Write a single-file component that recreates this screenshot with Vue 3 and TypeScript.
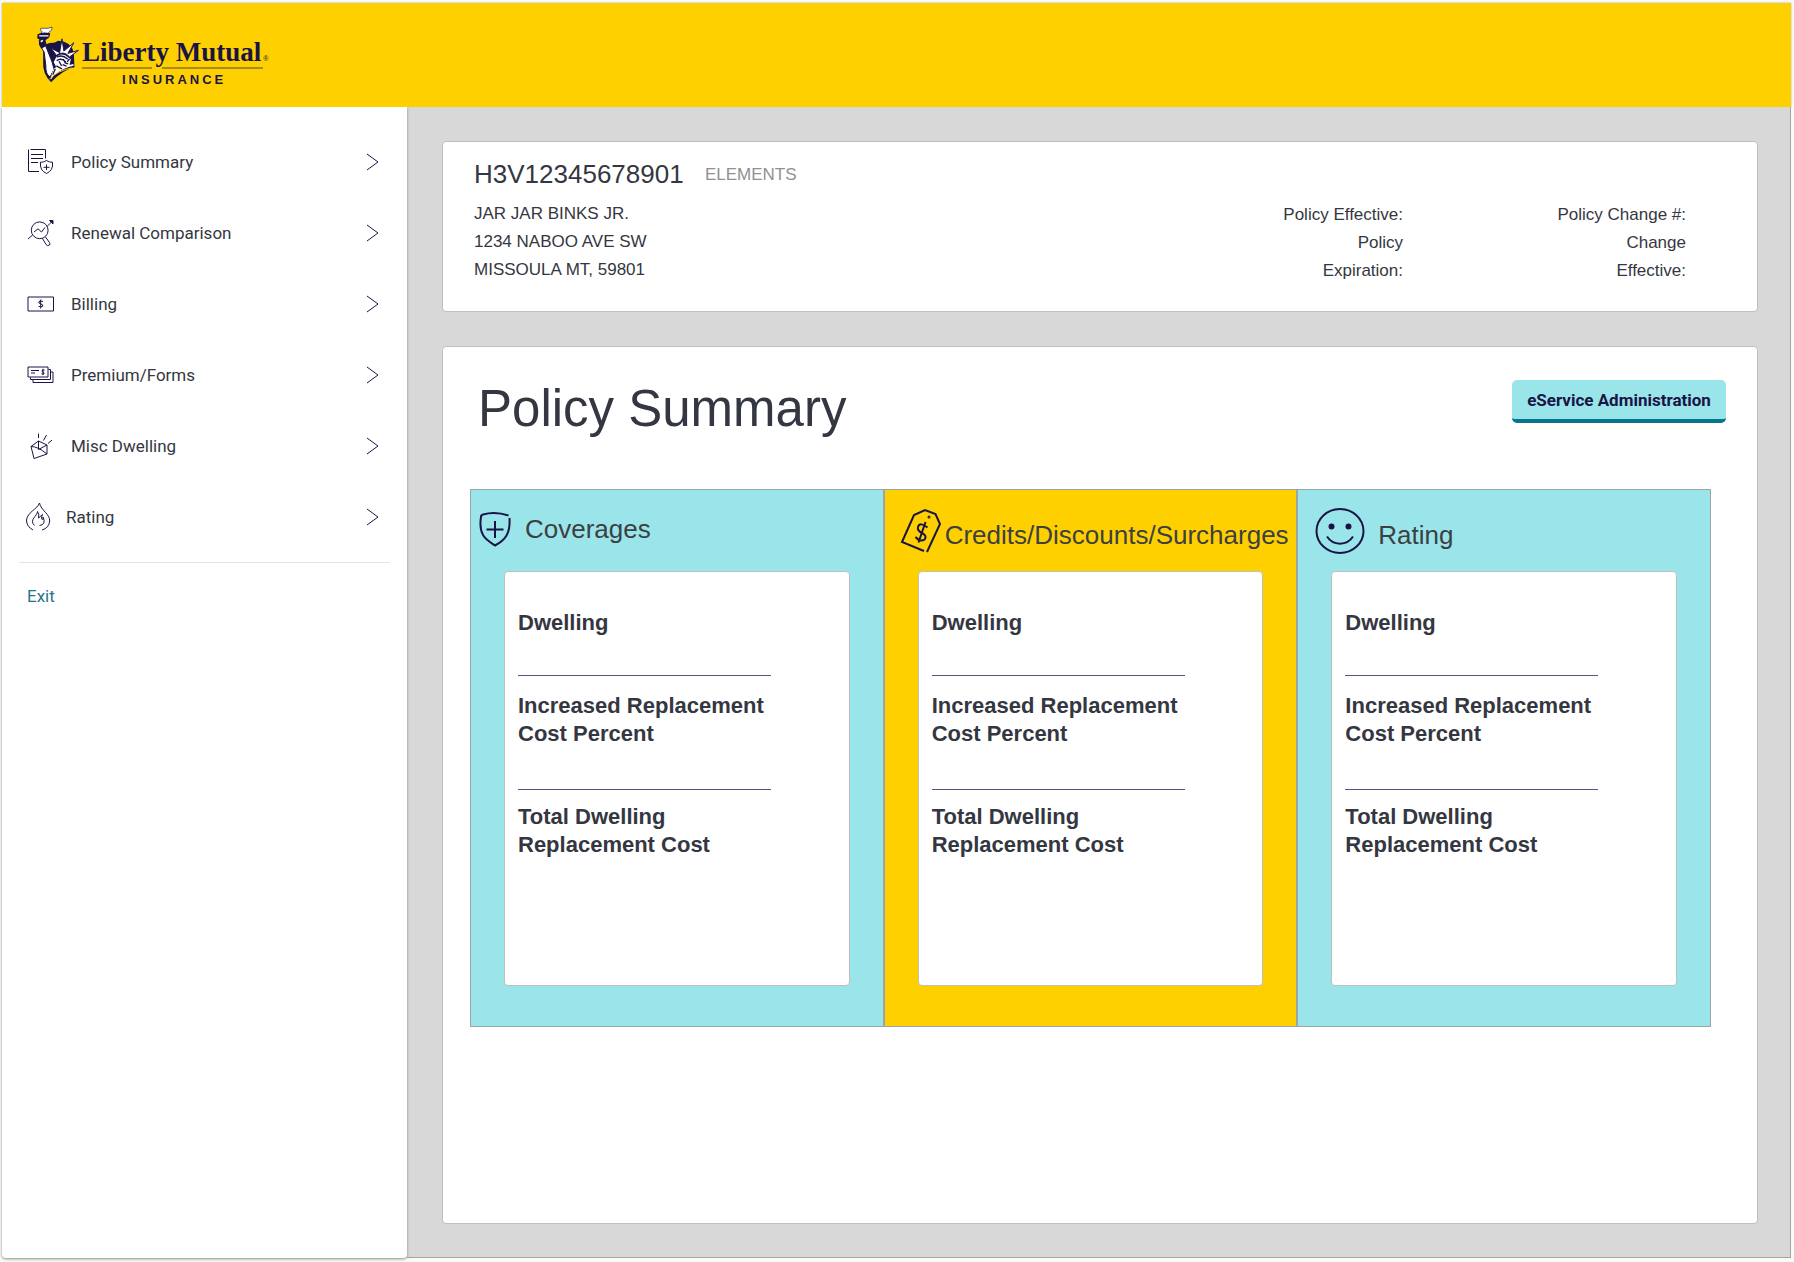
<script setup lang="ts">
interface Shape {
  d: string
  solid?: boolean
}

interface Icon {
  width: number
  height: number
  stroke: number
  shapes: Shape[]
}

interface NavItem {
  label: string
  icon: Icon
  tight?: boolean
}

interface Column {
  title: string
  icon: Icon
  tone: 'aqua' | 'gold'
  variant: string
}

const documentIcon: Icon = {
  width: 28, height: 28, stroke: 1,
  shapes: [
    { d: 'M3.500 1.500H18.500V10.500M1.500 1.500V23.500H12' },
    { d: 'M4 6.500H16M4 10.500H16M4 14.500H11' },
    { d: 'M19.500 12.500Q16.500 14.500 13.500 14.200Q12.500 22.500 19.500 25.500Q26.500 22.500 25.500 14.200Q22.500 14.500 19.500 12.500Z' },
    { d: 'M19.500 16.500V22M16.500 19.300H22.500' },
  ],
}

const magnifierIcon: Icon = {
  width: 28, height: 28, stroke: 1,
  shapes: [
    { d: 'M12.700 2.900A8.400 8.400 0 1 1 12.700 19.700A8.400 8.400 0 1 1 12.700 2.900Z' },
    { d: 'M7 13L11 9.800L14.500 13L18 8.500M1 20L5.500 16M20 7.500L25 2.500' },
    { d: 'M22.500 1.500H26V5Z', solid: true },
    { d: 'M15.500 19.500L19 25.500Q20.500 27.500 22.500 26Q23.500 25 22.500 23.500L18.500 18' },
  ],
}

const billIcon: Icon = {
  width: 28, height: 28, stroke: 1,
  shapes: [
    { d: 'M1 7H26.500V21H1Z' },
    { d: 'M16 11.500Q13.500 10.500 12 11.500Q11 13.300 13.700 13.900Q16.500 14.500 15.700 16.300Q14 17.500 11.500 16.300M13.700 9.500V18.500' },
  ],
}

const checksIcon: Icon = {
  width: 28, height: 28, stroke: 1,
  shapes: [
    { d: 'M1 6H21V16H1ZM3.500 16.500V18.500H23.500V8.500H21.500M6 19V21.500H26V11H24' },
    { d: 'M4 9.500H12M4 12H8M17.500 9Q15 8.300 15 10Q15 11 16 11.200Q17.500 11.700 17 12.700Q16 13.500 14.500 12.800M16 7.800V14' },
  ],
}

const boxIcon: Icon = {
  width: 28, height: 28, stroke: 1,
  shapes: [
    { d: 'M4 14.500L11.500 9L20 13V22L7 26.500Z' },
    { d: 'M4 14.500Q11 14.500 20 22M11.500 9V17.500L20 13' },
    { d: 'M11.500 1.500V6M19.500 3L16.500 8.500M25 8L21 11.500' },
  ],
}

const flameIcon: Icon = {
  width: 28, height: 30, stroke: 1,
  shapes: [
    { d: 'M8 28Q1.500 24.500 1.500 18C2.500 10 12.500 7 14.500 1C16 8.500 25 12 24.700 19Q24 26 17 28' },
    { d: 'M9.500 23.500C3.500 18 12.500 14 12.500 9.500Q14.500 12 13.500 16L17.500 12.500Q15.500 17.500 17.500 17.500Q18.500 16 18 15Q21.500 22.500 14.500 23.500' },
  ],
}

const shieldIcon: Icon = {
  width: 32, height: 38, stroke: 2,
  shapes: [
    { d: 'M29.500 5.500Q16 1 4 4.500Q2 5 2 7C-1 26 8 30 16 35.500C26 30 31.500 24 30.500 8' },
    { d: 'M16 11V28M7.500 19.500H24.500' },
  ],
}

const tagIcon: Icon = {
  width: 42, height: 46, stroke: 2,
  shapes: [
    { d: 'M24 43L2 34L14 7L25 2L35.500 6L40 16L27 44' },
    { d: 'M29 8.500A.5 .5 0 1 1 29 9.500A.5 .5 0 1 1 29 8.500Z', solid: true },
    { d: 'M27.500 19.500Q20 13.500 18 19Q17 22.500 22 25Q27.500 28 24.500 31.500Q20.500 34.500 15.500 29M25.500 14L18.500 34.500' },
  ],
}

const smileyIcon: Icon = {
  width: 50, height: 48, stroke: 2,
  shapes: [
    { d: 'M25 2A23.500 22 0 1 1 25 46A23.500 22 0 1 1 25 2Z' },
    { d: 'M12 29.500C18 39 32 39 38 29.500' },
    { d: 'M16.500 17.500A2 2 0 1 1 16.500 21.500A2 2 0 1 1 16.500 17.500ZM33.500 17.500A2 2 0 1 1 33.500 21.500A2 2 0 1 1 33.500 17.500Z', solid: true },
  ],
}

const navItems: NavItem[] = [
  { label: 'Policy Summary', icon: documentIcon },
  { label: 'Renewal Comparison', icon: magnifierIcon },
  { label: 'Billing', icon: billIcon },
  { label: 'Premium/Forms', icon: checksIcon },
  { label: 'Misc Dwelling', icon: boxIcon },
  { label: 'Rating', icon: flameIcon, tight: true },
]

const columns: Column[] = [
  { title: 'Coverages', icon: shieldIcon, tone: 'aqua', variant: 'coverages' },
  { title: 'Credits/Discounts/Surcharges', icon: tagIcon, tone: 'gold', variant: 'credits' },
  { title: 'Rating', icon: smileyIcon, tone: 'aqua', variant: 'rating' },
]

const dates: string[][] = [
  ['Policy Effective:', 'Policy', 'Expiration:'],
  ['Policy Change #:', 'Change', 'Effective:'],
]
</script>

<template>
  <div class="page">
    <header class="banner">
      <a class="logo" href="#" aria-label="Liberty Mutual Insurance">
        <svg class="emblem" viewBox="0 0 138 176" width="46" height="58" aria-hidden="true">
          <path fill="#1a1446" d="M27 66Q40 52 60 54L73 48Q112 50 120 84L122 128Q86 136 51 174Q24 146 27 112Z" />
          <path fill="#fff" stroke="#1a1446" stroke-width="3" d="M15 46L30 43L34 62L54 112L60 134L48 158Q34 150 35 122L30 82L17 62Z" />
          <path fill="#fff" stroke="#1a1446" stroke-width="2" d="M20 10H42L54 6L53 15L44 22L40 27H20L24 20L19 16Z" />
          <path fill="#1a1446" d="M10 28Q28 18 49 26L45 38L34 46L38 62L22 72L14 56L16 44L9 40Z" />
          <path fill="#fff" d="M15 31H43V35H15ZM19 48L27 45L26 50L20 53Z" />
          <path fill="#fff" stroke="#1a1446" stroke-width="3" d="M67 92L51 70L77 84L84 42L90 79L120 54L102 86L134 77L107 97Q89 76 67 92Z" />
          <path fill="#fff" d="M67 96Q86 82 104 99L111 104L107 121L119 118V124Q89 130 61 152L50 166Q55 128 67 128L59 113Z" />
          <path fill="none" stroke="#1a1446" stroke-width="4" d="M68 98Q84 88 102 104M68 108Q82 98 96 112M75 110L83 124M88 103L94 115L103 118M67 124L84 133M107 103L100 112M64 133L56 151M86 120L98 125" />
          <path fill="none" stroke="#ffd000" stroke-width="3" d="M46 164Q70 138 116 130" />
        </svg>
        <span class="wordmark">
          <span class="brand">Liberty Mutual<sup>®</sup></span>
          <svg class="rule" viewBox="0 0 181 2" height="2" aria-hidden="true"><path d="M0 0H70V2H0ZM80 0H181V2H80Z" fill="#a78a18" /></svg>
          <span class="insurance">INSURANCE</span>
        </span>
      </a>
    </header>

    <div class="body">
      <aside class="sidebar">
        <nav aria-label="Policy">
          <a v-for="item in navItems" :key="item.label" href="#" class="nav-item" :class="{ tight: item.tight }">
            <svg class="icon" :width="item.icon.width" :height="item.icon.height" aria-hidden="true">
              <path v-for="shape in item.icon.shapes" :key="shape.d" :d="shape.d" :stroke-width="item.icon.stroke" :class="{ solid: shape.solid }" />
            </svg>
            <span class="label">{{ item.label }}</span>
            <svg class="icon" width="14" height="20" aria-hidden="true"><path d="M1 2L12 10L1 18" /></svg>
          </a>
        </nav>
        <a href="#" class="exit">Exit</a>
      </aside>

      <main class="content">
        <section class="card policy">
          <div class="holder">
            <h2>H3V12345678901 <small>ELEMENTS</small></h2>
            <address>JAR JAR BINKS JR.<br>1234 NABOO AVE SW<br>MISSOULA MT, 59801</address>
          </div>
          <p v-for="group in dates" :key="group[0]" class="dates">
            <span v-for="line in group" :key="line">{{ line }}</span>
          </p>
        </section>

        <section class="card summary">
          <div class="summary-head">
            <h1>Policy Summary</h1>
            <button type="button">eService Administration</button>
          </div>
          <div class="columns">
            <article v-for="column in columns" :key="column.title" class="column" :class="column.tone">
              <h3 :class="column.variant">
                <svg class="icon" :width="column.icon.width" :height="column.icon.height" aria-hidden="true">
                  <path v-for="shape in column.icon.shapes" :key="shape.d" :d="shape.d" :stroke-width="column.icon.stroke" :class="{ solid: shape.solid }" />
                </svg>
                <span>{{ column.title }}</span>
              </h3>
              <ul class="card tile">
                <li>Dwelling</li>
                <li>Increased Replacement<br>Cost Percent</li>
                <li>Total Dwelling<br>Replacement Cost</li>
              </ul>
            </article>
          </div>
        </section>
      </main>
    </div>
  </div>
</template>

<style>
body {
  margin: 0;
  background: #fafafa;
}
</style>

<style scoped>
* {
  box-sizing: border-box;
}

.page {
  display: flex;
  flex-direction: column;
  min-height: 100vh;
  padding: 3px 3px 4px 2px;
  color: #343741;
  font: 17px/28px "Liberation Sans", Arial, sans-serif;
}

h1, h2, h3, p, ul {
  margin: 0;
  font-weight: 400;
}

a {
  text-decoration: none;
}

.icon {
  flex: none;
  overflow: visible;
  fill: none;
  stroke: #1a1446;
}

.icon .solid {
  fill: #1a1446;
}

.banner {
  height: 104px;
  padding: 22px 32px;
  background: #ffd000;
  box-shadow: 0 0 2px #aaa;
}

.logo {
  display: flex;
  width: max-content;
  color: #1a1446;
}

.emblem {
  margin-right: 2px;
}

.wordmark {
  display: flex;
  flex-direction: column;
  padding-top: 13px;
}

.brand {
  font: bold 27px/29px "Liberation Serif", "Times New Roman", serif;
}

.brand sup {
  padding-left: 2px;
  font: 7px/7px "Liberation Sans", Arial, sans-serif;
  vertical-align: baseline;
}

.rule {
  width: 181px;
}

.insurance {
  padding: 2px 0 0 40px;
  font: bold 13px/18px "Liberation Sans", Arial, sans-serif;
  letter-spacing: 3px;
}

.body {
  display: flex;
  flex: 1;
}

.sidebar {
  position: relative;
  flex: none;
  width: 405px;
  padding: 19px 17px;
  border-radius: 0 0 4px 4px;
  background: #fff;
  box-shadow: 0 1px 3px #888;
  clip-path: inset(0 -6px -6px -2px);
  font-family: Roboto, sans-serif;
}

nav {
  padding-bottom: 10px;
  border-bottom: 1px solid #e3e5e6;
}

.nav-item {
  display: flex;
  gap: 16px;
  align-items: center;
  height: 71px;
  padding: 0 10px 0 8px;
  color: #343741;
}

.nav-item.tight {
  gap: 13px;
  padding-left: 6px;
}

.label {
  flex: 1;
}

.exit {
  display: block;
  margin-top: 19px;
  padding: 0 8px;
  color: #28748b;
}

.content {
  display: flex;
  flex: 1;
  flex-direction: column;
  gap: 34px;
  min-width: 0;
  padding: 34px 32px 33px 35px;
  border: solid #a3a3a3;
  border-width: 0 1px 1px 0;
  background: #d8d8d8;
}

.card {
  border: 1px solid #c0bfc0;
  border-radius: 4px;
  background: #fff;
}

.policy {
  display: flex;
  align-items: flex-start;
  min-height: 171px;
  padding: 16px 71px 16px 31px;
}

.holder {
  flex: 1;
}

h2 {
  font-size: 26px;
  line-height: 32px;
}

h2 small {
  margin-left: 14px;
  color: #919191;
  font-size: 17px;
  vertical-align: 3px;
}

address {
  margin-top: 9px;
  font-style: normal;
}

.dates {
  display: flex;
  flex-direction: column;
  width: 283px;
  padding-top: 43px;
  text-align: right;
}

.summary {
  flex: 1;
  padding: 33px 46px 40px 27px;
}

.summary-head {
  display: flex;
  align-items: flex-start;
  justify-content: space-between;
  min-height: 109px;
  margin-right: -15px;
}

h1 {
  padding-left: 8px;
  font-size: 51px;
  line-height: 58px;
}

button {
  min-width: 214px;
  height: 43px;
  padding: 0 13px;
  border: 0;
  border-bottom: 4px solid #06748c;
  border-radius: 5px;
  background: #99e5ea;
  color: #1a1446;
  font: bold 17px/24px Roboto, sans-serif;
}

.columns {
  display: flex;
}

.column {
  flex: 1;
  min-width: 0;
  padding: 0 33px 40px;
  border: 1px solid #9aa5a5;
}

.aqua {
  background: #99e5ea;
}

.gold {
  background: #ffd000;
}

h3 {
  display: flex;
  align-items: center;
  height: 81px;
  margin: 0 -33px;
  color: #3d4042;
  font-size: 26px;
  line-height: 30px;
  white-space: nowrap;
}

.coverages {
  gap: 14px;
  padding: 0 0 4px 8px;
}

.credits {
  gap: 3px;
  padding-left: 15px;
}

.rating {
  gap: 13px;
  padding-left: 17px;
}

.credits span,
.rating span {
  padding-top: 8px;
}

.tile {
  min-height: 415px;
  padding: 37px 13px;
  list-style: none;
  font-size: 22px;
}

.tile li {
  width: 253px;
  padding-bottom: 38px;
  font-weight: 700;
  white-space: nowrap;
}

.tile li + li {
  padding: 16px 0 41px;
  border-top: 1px solid #5a5187;
}

.tile li:last-child {
  padding: 13px 0;
}
</style>
